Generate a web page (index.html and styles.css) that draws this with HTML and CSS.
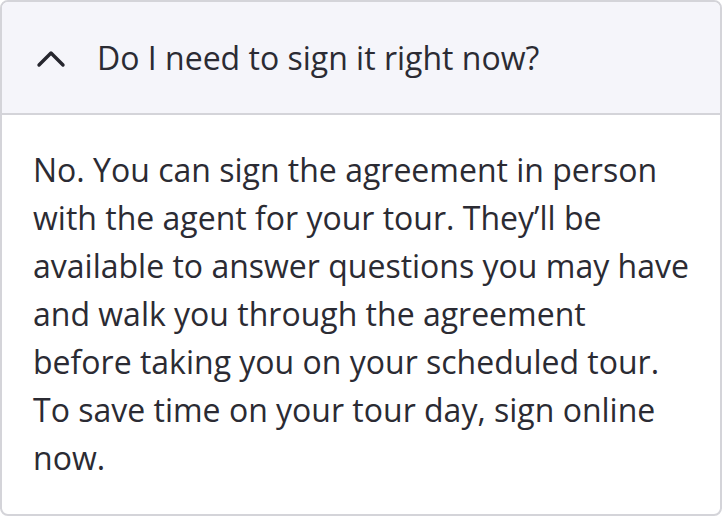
FILE: index.html
```html
<!DOCTYPE html>
<html>
<head>
<meta charset="utf-8">
<link rel="stylesheet" href="styles.css">
</head>
<body>
<div class="card">
  <div class="header">
    <svg class="chev" width="30" height="18" viewBox="0 0 30 18"><path d="M3 15 L15 3 L27 15" fill="none" stroke="#26262e" stroke-width="3.4" stroke-linecap="round" stroke-linejoin="round"/></svg>
    <span class="title">Do I need to sign it right now?</span>
  </div>
  <div class="body">No. You can sign the agreement in person with the agent for your tour. They’ll be available to answer questions you may have and walk you through the agreement before taking you on your scheduled tour. To save time on your tour day, sign online now.</div>
</div>
</body>
</html>
```
FILE: styles.css
```css
html, body { margin: 0; padding: 0; background: #fff; }
body { font-family: "Open Sans", sans-serif; color: #2b2b33; }
.card {
  width: 722px; height: 516px; box-sizing: border-box;
  border: 2px solid #d4d4d9; border-radius: 8px; overflow: hidden;
}
.header {
  height: 113px; box-sizing: border-box;
  background: #f5f5fa; border-bottom: 2px solid #d4d4d9;
  display: flex; align-items: center; padding-left: 34px;
}
.chev { display: block; margin-right: 31px; margin-top: 2px; }
.title { font-size: 32px; }
.body {
  width: 657px;
  padding: 31px 0 0 31px;
  font-size: 32px; line-height: 48px;
}
```
